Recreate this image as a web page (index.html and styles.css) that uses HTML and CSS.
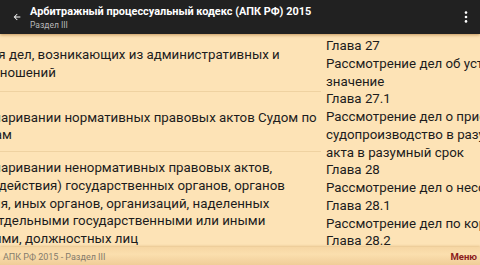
FILE: index.html
```html
<!DOCTYPE html>
<html lang="ru">
<head>
<meta charset="utf-8">
<title>АПК РФ 2015 - Раздел III</title>
<link rel="stylesheet" href="styles.css">
</head>
<body>
<div class="app">
  <header class="toolbar">
    <svg class="back" width="10" height="10" viewBox="0 0 24 24"><path d="M20 11H7.83l5.59-5.59L12 4l-8 8 8 8 1.41-1.41L7.83 13H20v-2z" fill="#fff"/></svg>
    <div class="titles">
      <div class="title">Арбитражный процессуальный кодекс (АПК РФ) 2015</div>
      <div class="subtitle">Раздел III</div>
    </div>
    <svg class="kebab" width="4" height="12" viewBox="0 0 4 12"><circle cx="2" cy="1.6" r="1.3" fill="#fff"/><circle cx="2" cy="6" r="1.3" fill="#fff"/><circle cx="2" cy="10.4" r="1.3" fill="#fff"/></svg>
  </header>
  <main class="pager">
    <div class="track">
      <section class="page page-left">
        <div class="item item-first">Положения рассмотрения дел, возникающих из административных и<br>иных публичных правоотношений</div>
        <div class="item item-mid">Рассмотрение дел об оспаривании нормативных правовых актов Судом по<br>интеллектуальным правам</div>
        <div class="item">Рассмотрение дел об оспаривании ненормативных правовых актов,<br>решений и действий (бездействия) государственных органов, органов<br>местного самоуправления, иных органов, организаций, наделенных<br>федеральным законом отдельными государственными или иными<br>публичными полномочиями, должностных лиц</div>
      </section>
      <section class="page page-right">
        <div class="chapter"><div class="num">Глава 27</div><div class="name">Рассмотрение дел об установлении фактов, имеющих юридическое<br>значение</div></div>
        <div class="chapter"><div class="num">Глава 27.1</div><div class="name">Рассмотрение дел о присуждении компенсации за нарушение права на<br>судопроизводство в разумный срок или права на исполнение судебного<br>акта в разумный срок</div></div>
        <div class="chapter"><div class="num">Глава 28</div><div class="name">Рассмотрение дел о несостоятельности (банкротстве)</div></div>
        <div class="chapter"><div class="num">Глава 28.1</div><div class="name">Рассмотрение дел по корпоративным спорам</div></div>
        <div class="chapter"><div class="num">Глава 28.2</div><div class="name">Рассмотрение дел о защите прав и законных интересов группы лиц</div></div>
      </section>
    </div>
  </main>
  <footer class="footer">
    <span class="footer-title">АПК РФ 2015 - Раздел III</span>
    <span class="menu">Меню</span>
  </footer>
</div>
</body>
</html>
```
FILE: styles.css
```css
* { box-sizing: border-box; }
html, body { margin: 0; padding: 0; }
body {
  width: 480px;
  height: 265px;
  overflow: hidden;
  font-family: Roboto, "Noto Sans", sans-serif;
  background: #fde3b6;
}
.app {
  display: flex;
  flex-direction: column;
  height: 265px;
}
.toolbar {
  height: 34px;
  flex: none;
  background: #212121;
  display: flex;
  align-items: center;
  padding: 0 12px 0 12px;
  color: #fff;
  position: relative;
  z-index: 2;
  box-shadow: 0 1px 3px rgba(150, 90, 20, 0.55);
}
.back { flex: none; margin-right: 8px; }
.titles { flex: 1; display: flex; flex-direction: column; gap: 1px; }
.title { font-size: 10.9px; font-weight: 700; line-height: 14px; }
.subtitle { font-size: 8.5px; line-height: 10px; color: #b8b8b8; }
.kebab { flex: none; }
.pager {
  flex: 1;
  overflow: hidden;
  position: relative;
}
.track {
  display: flex;
  width: 960px;
  transform: translateX(-159px);
}
.page {
  width: 480px;
  flex: none;
  font-size: 13.3px;
  line-height: 17.75px;
  color: #1c1c1c;
  white-space: nowrap;
  overflow: hidden;
}
.page-left {
  padding-left: 0;
}
.item-first {
  padding-top: 12px;
  padding-bottom: 9px;
  border-bottom: 1px solid rgba(200, 160, 100, 0.25);
  margin-bottom: 17px;
}
.item-mid {
  padding-bottom: 7px;
  margin-bottom: 7px;
  border-bottom: 1px solid rgba(200, 160, 100, 0.25);
}
.page-right {
  padding: 3px 0 0 5px;
}
.footer {
  height: 18px;
  flex: none;
  display: flex;
  align-items: center;
  justify-content: space-between;
  padding: 1px 3px 0 3px;
  background: linear-gradient(#f6d6a3, #fbdfae 40%, #f0cd98);
  box-shadow: 0 -1px 2px rgba(190, 140, 70, 0.35);
  position: relative;
}
.footer-title { font-size: 9px; color: #857b6c; }
.menu { font-size: 9.5px; font-weight: 700; color: #8b1d1d; }
```
